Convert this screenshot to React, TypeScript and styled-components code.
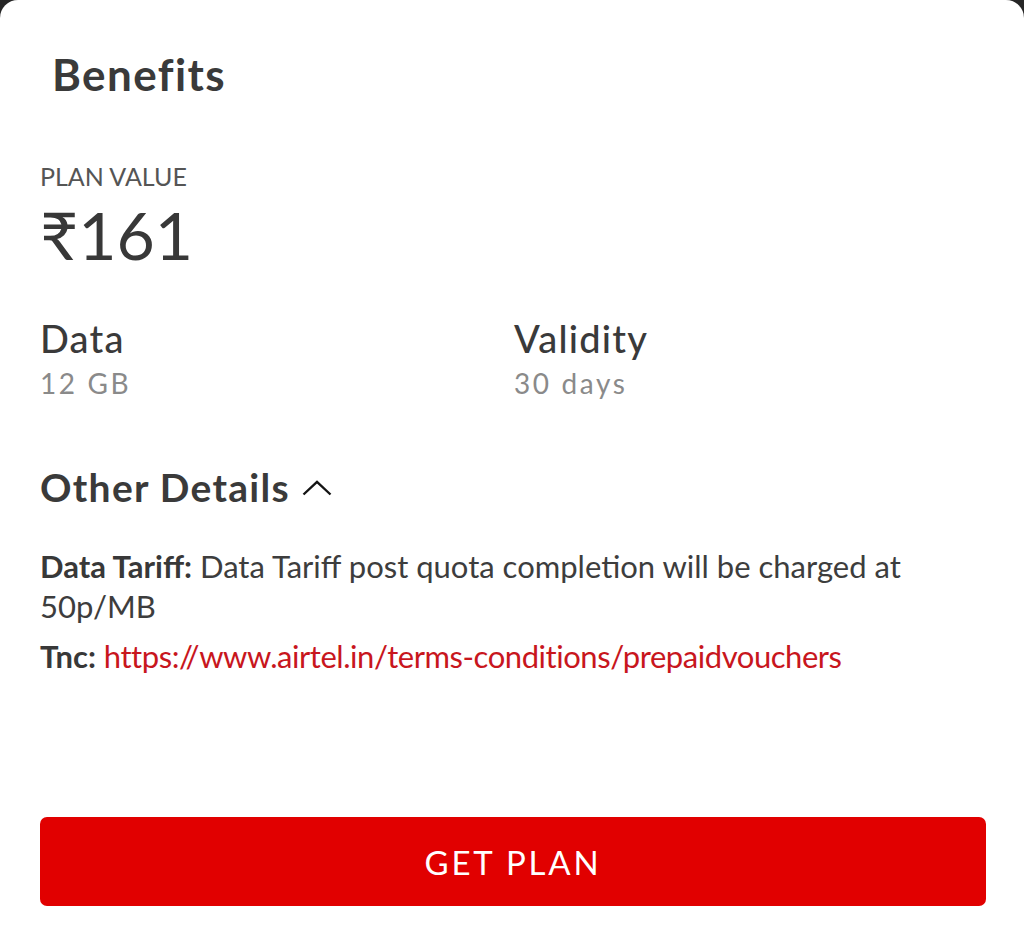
import { createGlobalStyle, styled } from "styled-components";

const GlobalStyle = createGlobalStyle`
  html, body {
    margin: 0;
    padding: 0;
    background: #262626;
  }
  * {
    box-sizing: border-box;
  }
`;

const details = [
  { label: "Data", value: "12 GB" },
  { label: "Validity", value: "30 days" },
];

function App() {
  return (
    <>
      <GlobalStyle />
      <Sheet>
        <Title>Benefits</Title>
        <Caption>PLAN VALUE</Caption>
        <Price>₹161</Price>
        <DetailRow>
          {details.map((ele) => (
            <DetailCell key={ele.label}>
              <DetailLabel>{ele.label}</DetailLabel>
              <DetailValue>{ele.value}</DetailValue>
            </DetailCell>
          ))}
        </DetailRow>
        <SectionHead>
          Other Details
          <svg width="30" height="16" viewBox="0 0 30 16" fill="none">
            <path d="M1.5 14.5 L15 1.8 L28.5 14.5" stroke="#141414" strokeWidth="2.4" />
          </svg>
        </SectionHead>
        <Para>
          <b>Data Tariff:</b> Data Tariff post quota completion will be charged at
          50p/MB
        </Para>
        <Para>
          <b>Tnc:</b>{" "}
          <Link href="https://www.airtel.in/terms-conditions/prepaidvouchers">
            https://www.airtel.in/terms-conditions/prepaidvouchers
          </Link>
        </Para>
        <Footer>
          <PlanButton>GET PLAN</PlanButton>
        </Footer>
      </Sheet>
    </>
  );
}

export default App;

const Sheet = styled.div`
  display: flex;
  flex-direction: column;
  min-height: 943px;
  padding: 0 38px 0 40px;
  background: #ffffff;
  border-radius: 18px 18px 0 0;
  font-family: Lato, "Noto Sans", sans-serif;
  color: #3a3a3a;
`;

const Title = styled.h1`
  margin: 48px 0 0 12px;
  font-size: 44px;
  line-height: 1.2;
  font-weight: 700;
  letter-spacing: 1.4px;
  color: #3a3a3a;
`;

const Caption = styled.div`
  margin-top: 60px;
  font-size: 25px;
  line-height: 1.2;
  font-weight: 400;
  color: #555555;
`;

const Price = styled.div`
  margin-top: 4px;
  font-size: 66px;
  line-height: 1.2;
  font-weight: 400;
  color: #383838;
`;

const DetailRow = styled.div`
  display: grid;
  grid-template-columns: 474px 1fr;
  margin-top: 42px;
`;

const DetailCell = styled.div`
  display: flex;
  flex-direction: column;
`;

const DetailLabel = styled.div`
  font-size: 38px;
  line-height: 1.2;
  font-weight: 500;
  letter-spacing: 1.2px;
  color: #3a3a3a;
`;

const DetailValue = styled.div`
  margin-top: 5px;
  font-size: 28px;
  line-height: 1.2;
  letter-spacing: 2.6px;
  color: #8a8a8a;
`;

const SectionHead = styled.h2`
  display: flex;
  align-items: center;
  gap: 12px;
  margin: 64px 0 0;
  font-size: 39px;
  line-height: 1.2;
  font-weight: 700;
  letter-spacing: 1.3px;
  color: #3a3a3a;
`;

const Para = styled.p`
  margin: 35px 0 0;
  max-width: 880px;
  font-size: 31px;
  line-height: 40px;
  color: #3d3d3d;

  & + & {
    margin-top: 10px;
  }

  b {
    font-weight: 700;
    color: #383838;
  }
`;

const Link = styled.a`
  color: #c8161d;
  text-decoration: none;
  letter-spacing: -0.45px;
`;

const Footer = styled.div`
  margin-top: auto;
  padding-bottom: 37px;
`;

const PlanButton = styled.button`
  display: flex;
  align-items: center;
  justify-content: center;
  width: 946px;
  height: 89px;
  border: none;
  border-radius: 7px;
  background: #e10000;
  color: #ffffff;
  font-family: Lato, "Noto Sans", sans-serif;
  font-size: 33px;
  letter-spacing: 2.8px;
`;
